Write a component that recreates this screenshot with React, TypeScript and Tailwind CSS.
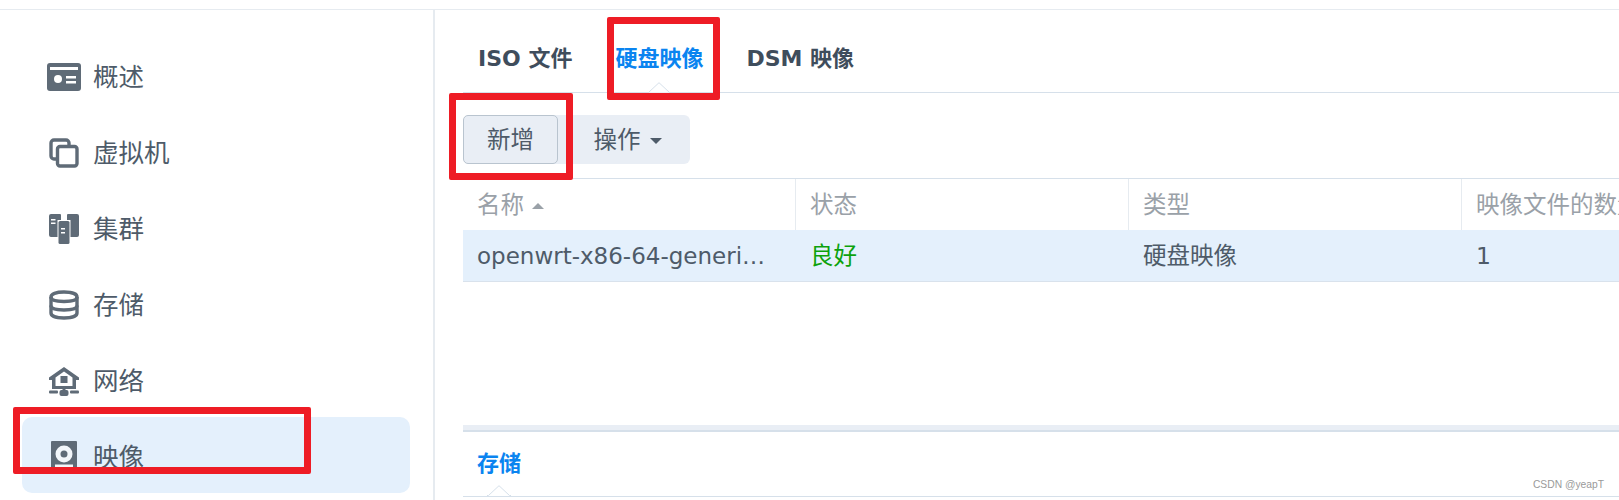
const font = { fontFamily: '"DejaVu Sans", "Noto Sans CJK SC", sans-serif' };

function OverviewIcon() {
  return (
    <svg width="34" height="28" viewBox="0 0 34 28" fill="none">
      <rect width="34" height="28" rx="3" fill="#5f6b77" />
      <rect x="3" y="4" width="28" height="3" fill="#fff" />
      <circle cx="11" cy="16" r="4" fill="#fff" />
      <rect x="19" y="13" width="10" height="2.5" fill="#fff" />
      <rect x="19" y="18" width="10" height="2.5" fill="#fff" />
    </svg>
  );
}

function VmIcon() {
  return (
    <svg width="30" height="30" viewBox="0 0 30 30" fill="none" stroke="#5f6b77" strokeWidth="3.4">
      <path d="M7 21H5a3 3 0 0 1-3-3V5a3 3 0 0 1 3-3h12a3 3 0 0 1 3 3v2" />
      <rect x="8.500" y="8.500" width="19.500" height="19.500" rx="2.500" />
    </svg>
  );
}

function ClusterIcon() {
  return (
    <svg width="30" height="30" viewBox="0 0 30 30" fill="#5f6b77">
      <path d="M2 0h9a1 1 0 0 1 1 1v5H8.500v17H2a2 2 0 0 1-2-2V2a2 2 0 0 1 2-2z" />
      <path d="M18 1a1 1 0 0 1 1-1h9a2 2 0 0 1 2 2v19a2 2 0 0 1-2 2h-6.500V6H18z" />
      <rect x="9.500" y="7" width="11" height="23" rx="1.500" />
      <g fill="#fff">
        <rect x="2" y="5" width="4.500" height="1.500" />
        <rect x="2" y="8.500" width="4.500" height="1.500" />
        <rect x="12" y="14" width="4" height="1.500" />
        <rect x="12" y="18" width="4" height="1.500" />
      </g>
    </svg>
  );
}

function StorageIcon() {
  return (
    <svg width="30" height="30" viewBox="0 0 30 30" fill="none" stroke="#5f6b77" strokeWidth="3.4">
      <path d="M2 7c0-3 5-5 13-5s13 2 13 5v16c0 3-5 5-13 5s-13-2-13-5z" />
      <path d="M2 7c0 3 5 4.500 13 4.500S28 10 28 7" />
      <path d="M2 15.500c0 3 5 4.500 13 4.500s13-1.500 13-4.500" />
    </svg>
  );
}

function NetworkIcon() {
  return (
    <svg width="30" height="29" viewBox="0 0 30 29" fill="#5f6b77">
      <path fillRule="evenodd" d="M15 0 30 10.500v2.500h-3v9H3v-9H0v-2.500zM6.500 10.500V19h17v-8.500L15 4.500z" />
      <rect x="11.500" y="9" width="7" height="7" />
      <rect x="13.500" y="21" width="3" height="3" />
      <rect x="0" y="23.500" width="9" height="3" rx="1" />
      <rect x="21" y="23.500" width="9" height="3" rx="1" />
      <rect x="10.500" y="23" width="9" height="6" rx="2" />
    </svg>
  );
}

function ImageIcon() {
  return (
    <svg width="26" height="32" viewBox="0 0 26 32" fill="#5f6b77">
      <path d="M1 0h24a1 1 0 0 1 1 1v31H0V1a1 1 0 0 1 1-1z" />
      <circle cx="13" cy="13" r="8.500" fill="#f2f6fa" />
      <circle cx="13" cy="13" r="3.500" fill="#5f6b77" />
      <rect x="4" y="23.500" width="18" height="2.500" fill="#f2f6fa" />
    </svg>
  );
}

const navItems = [
  { label: '概述', icon: <OverviewIcon /> },
  { label: '虚拟机', icon: <VmIcon /> },
  { label: '集群', icon: <ClusterIcon /> },
  { label: '存储', icon: <StorageIcon /> },
  { label: '网络', icon: <NetworkIcon /> },
  { label: '映像', icon: <ImageIcon />, active: true },
];

function TabNotch({ className }: { className: string }) {
  return (
    <svg
      className={`absolute left-1/2 -translate-x-1/2 ${className}`}
      width="24"
      height="11"
      viewBox="0 0 24 11"
      fill="#fff"
      stroke="#d6e0ea"
    >
      <path d="M0 10.500h1.500L12 0.700 22.500 10.500H24" />
    </svg>
  );
}

function HeaderCell({ children, last }: { children: React.ReactNode; last?: boolean }) {
  return (
    <div
      className={`flex items-center gap-2 pl-[14px] pt-[2px] whitespace-nowrap overflow-hidden ${
        last ? '' : 'border-r border-[#e6ebf0]'
      }`}
    >
      {children}
    </div>
  );
}

export default function App() {
  return (
    <div className="relative w-[1619px] h-[500px] overflow-hidden bg-white" style={font}>
      <div className="h-[10px] border-b border-[#e6ebf0]" />
      <div className="flex h-[490px]">
        {/* sidebar */}
        <div className="w-[435px] shrink-0 border-r-2 border-[#e6ebf0] pt-[27px] pl-[22px] pr-[23px]">
          {navItems.map((item) => (
            <div
              key={item.label}
              className={`flex items-center h-[76px] pt-[4px] rounded-[10px] ${
                item.active ? 'bg-[#e4f0fc]' : ''
              }`}
            >
              <div className="w-[71px] pl-[24px] flex items-center justify-center shrink-0 pr-[12px]">
                {item.icon}
              </div>
              <span className="text-[25.5px] leading-none pt-[1px] text-[#4e5b69]">{item.label}</span>
            </div>
          ))}
        </div>

        {/* main */}
        <div className="flex-1 min-w-0 pl-[28px] flex flex-col">
          <div className="h-[83px] border-b border-[#d6e0ea] flex items-start gap-[43px] pl-[15px] pt-[38px] font-bold text-[22px] leading-none text-[#3f4d5c] whitespace-nowrap">
            <span>ISO 文件</span>
            <span className="relative text-[#0a84f0]">
              硬盘映像
              <TabNotch className="top-[34px]" />
            </span>
            <span>DSM 映像</span>
          </div>

          {/* toolbar */}
          <div className="h-[85px] flex items-start pt-[22px] text-[23.5px] text-[#4e5b69] leading-none">
            <button className="w-[95px] h-[49px] pt-[2px] rounded-[5px] border border-[#b9c4cf] bg-[#e9eef5] z-10">新增</button>
            <button className="w-[137px] h-[49px] -ml-[5px] pt-[3px] rounded-r-[6px] bg-[#e9eef5] flex items-center justify-center gap-[9px] pl-[12px]">
              操作
              <svg width="12" height="6" viewBox="0 0 12 6" fill="#4e5b69">
                <path d="M0 0h12L6 6z" />
              </svg>
            </button>
          </div>

          {/* table */}
          <div className="border-t border-[#d6e0ea]">
            <div className="grid grid-cols-[333px_333px_333px_1fr] h-[51px] text-[23.5px] text-[#9aa1a8]">
              <HeaderCell>
                名称
                <svg width="12" height="6" viewBox="0 0 12 6" fill="#9aa1a8">
                  <path d="M6 0l6 6H0z" />
                </svg>
              </HeaderCell>
              <HeaderCell>状态</HeaderCell>
              <HeaderCell>类型</HeaderCell>
              <HeaderCell last>映像文件的数量</HeaderCell>
            </div>
            <div className="grid grid-cols-[333px_333px_333px_1fr] h-[52px] items-center pt-[2px] bg-[#e4f0fc] border-b border-[#d9e2ec] text-[23.5px] text-[#4e5b69]">
              <div className="pl-[14px] text-[23px] whitespace-nowrap">openwrt-x86-64-generi…</div>
              <div className="pl-[14px] text-[#0ca20c]">良好</div>
              <div className="pl-[14px]">硬盘映像</div>
              <div className="pl-[14px]">1</div>
            </div>
          </div>

          <div className="h-[143px] shrink-0" />

          {/* detail panel */}
          <div className="h-[7px] shrink-0 bg-[#e9eef5] border-b-2 border-[#d6e0ea]" />
          <div className="h-[65px] shrink-0 border-b border-[#d6e0ea] flex items-start pl-[14px] pt-[21px]">
            <span className="relative font-bold text-[22px] leading-none text-[#0a84f0]">
              存储
              <TabNotch className="top-[32px]" />
            </span>
          </div>
        </div>
      </div>

      {/* screenshot annotations */}
      <div className="absolute left-[13px] top-[407px] w-[298px] h-[67px] border-[7px] border-[#ee1c25] rounded-[2px]" />
      <div className="absolute left-[607px] top-[17px] w-[113px] h-[83px] border-[7px] border-[#ee1c25] rounded-[2px]" />
      <div className="absolute left-[449px] top-[93px] w-[124px] h-[87px] border-[7px] border-[#ee1c25] rounded-[2px]" />
      <div
        className="absolute right-[15px] bottom-[10px] text-[10.3px] leading-none text-[#9a9a9a]"
        style={{ fontFamily: '"Liberation Sans", sans-serif' }}
      >
        CSDN @yeapT
      </div>
    </div>
  );
}
